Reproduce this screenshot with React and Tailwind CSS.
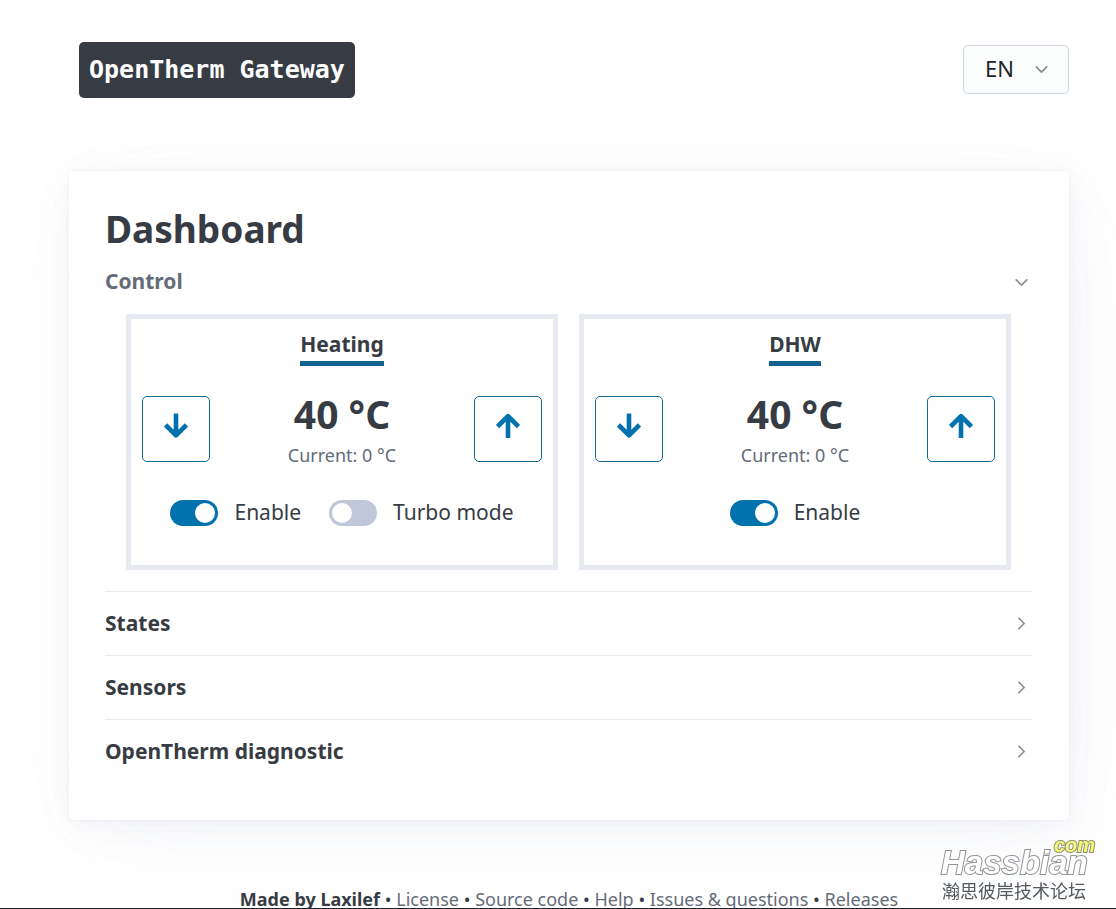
import { useState } from 'react'
import { ChevronDown, ChevronRight } from 'lucide-react'

const FOOTER_LINKS = ['License', 'Source code', 'Help', 'Issues & questions', 'Releases']

// ── Icons ────────────────────────────────────────────────────────────────────
function ArrowIcon({ d }) {
  return (
    <svg
      width="24"
      height="26"
      viewBox="0 0 24 26"
      fill="none"
      stroke="currentColor"
      strokeWidth="4.6"
      strokeLinejoin="round"
      aria-hidden="true"
    >
      <path d={d} />
    </svg>
  )
}

const ARROW_DOWN = 'M12 0.5V22M1.6 12L12 22.4L22.4 12'
const ARROW_UP = 'M12 25V3.5M1.6 13.5L12 3.1L22.4 13.5'

// ── Switch ───────────────────────────────────────────────────────────────────
function Switch({ id, label, defaultChecked }) {
  return (
    <div className="flex items-center gap-4">
      <input
        id={id}
        type="checkbox"
        role="switch"
        defaultChecked={defaultChecked}
        className="flex h-[26px] w-12 shrink-0 cursor-pointer appearance-none items-center rounded-full bg-[#bfc7d9] p-[3px] before:block before:size-5 before:rounded-full before:bg-white checked:justify-end checked:bg-[#0172ad]"
      />
      <label htmlFor={id} className="cursor-pointer pb-[2px] text-[21px] leading-8">
        {label}
      </label>
    </div>
  )
}

function StepButton({ d, label, onClick }) {
  return (
    <button
      type="button"
      aria-label={label}
      onClick={onClick}
      className="flex h-[66px] w-[68px] shrink-0 cursor-pointer justify-center rounded-[5px] border border-[#126a94] pt-4 text-[#0172ad]"
    >
      <ArrowIcon d={d} />
    </button>
  )
}

// ── Thermostat ───────────────────────────────────────────────────────────────
function Thermostat({ title, children }) {
  const [target, setTarget] = useState(40)

  return (
    <section className="min-w-0 flex-1 border-[5px] border-[#e7eaf0] px-[11px] pt-2 pb-[35px]">
      <h2 className="mx-auto w-fit border-b-[5px] border-[#126490] text-[21px] leading-[34px] font-bold">
        {title}
      </h2>
      <div className="mt-[18px] flex items-center justify-between">
        <StepButton d={ARROW_DOWN} label={`${title} down`} onClick={() => setTarget(target - 1)} />
        <div className="pt-[7px] pb-px text-center">
          <div className="text-[39px] leading-[46px] font-bold">{target} °C</div>
          <div className="text-[18px] leading-9 text-[#646b79]">Current: 0 °C</div>
        </div>
        <StepButton d={ARROW_UP} label={`${title} up`} onClick={() => setTarget(target + 1)} />
      </div>
      <div className="mt-[22px] flex justify-center gap-7">{children}</div>
    </section>
  )
}

function Panel({ title, children }) {
  return (
    <details className="border-t border-[#e7e9ea]">
      <summary className="flex h-[63px] cursor-pointer list-none items-center justify-between text-[21px] font-bold">
        {title}
        <ChevronRight size={21} strokeWidth={2} className="text-[#8b8f96]" />
      </summary>
      {children}
    </details>
  )
}

export default function App() {
  return (
    <div className="min-h-screen overflow-hidden border-b border-[#1c212c] bg-white pr-[47px] pl-[69px] font-['Noto_Sans',sans-serif] text-[#373c44]">
      <header className="flex items-start justify-between pt-[42px] pl-[10px]">
        <h1 className="rounded-[5px] bg-[#373c44] px-[10px] font-['DejaVu_Sans_Mono',monospace] text-[25px] leading-[56px] font-bold text-white">
          OpenTherm Gateway
        </h1>
        <div className="relative mt-[3px]">
          <select
            aria-label="Language"
            defaultValue="EN"
            className="h-[49px] w-[106px] cursor-pointer appearance-none rounded-[5px] border border-[#cfd5e2] bg-[#fbfcfc] pb-[2px] pl-[21px] text-[22px] text-[#23262c]"
          >
            <option>EN</option>
            <option>RU</option>
          </select>
          <ChevronDown
            size={21}
            strokeWidth={2}
            className="pointer-events-none absolute top-[14px] right-[17px] text-[#8b8f96]"
          />
        </div>
      </header>

      <main className="mt-[73px] rounded-[5px] bg-white pt-[33px] pr-[37px] pb-[37px] pl-9 shadow-[0_1px_4px_rgba(129,145,181,0.017),1px_1px_8px_rgba(129,145,181,0.024),1px_3px_16px_rgba(129,145,181,0.03),2px_5px_28px_rgba(129,145,181,0.036),4px_9px_52px_rgba(129,145,181,0.043),10px_20px_120px_rgba(129,145,181,0.06),0_0_0_1px_rgba(129,145,181,0.015)]">
        <h2 className="text-[37px] leading-[50px] font-bold">Dashboard</h2>

        <details open className="pb-[21px]">
          <summary className="mt-3 mb-4 flex h-8 cursor-pointer list-none items-center justify-between text-[21px] font-bold text-[#646b79]">
            Control
            <ChevronDown size={21} strokeWidth={2} className="text-[#8b8f96]" />
          </summary>
          <div className="flex gap-[21px] px-[21px]">
            <Thermostat title="Heating">
              <Switch id="heating-enable" label="Enable" defaultChecked />
              <Switch id="heating-turbo" label="Turbo mode" />
            </Thermostat>
            <Thermostat title="DHW">
              <Switch id="dhw-enable" label="Enable" defaultChecked />
            </Thermostat>
          </div>
        </details>

        <Panel title="States" />
        <Panel title="Sensors" />
        <Panel title="OpenTherm diagnostic" />
      </main>

      <footer className="mt-[70px] text-center text-[18px] leading-[18px]">
        <b>Made by Laxilef</b>
        {FOOTER_LINKS.map((link) => (
          <span key={link}>
            {' • '}
            <a href="#" className="text-[#646b79]">
              {link}
            </a>
          </span>
        ))}
      </footer>

      {/* forum stamp */}
      <div className="pointer-events-none fixed right-[21px] bottom-[7px] w-[154px] font-['Liberation_Sans','Noto_Sans_CJK_SC',sans-serif] text-[#555a60]">
        <div className="absolute -top-[11px] right-0 text-[20px] leading-5 font-bold text-[#f4f77a] italic [-webkit-text-stroke:2px_#8c8f6c] [paint-order:stroke_fill]">
          com
        </div>
        <div className="pb-[2px] text-[33px] leading-[34px] font-bold text-white italic [-webkit-text-stroke:2px_#909397] [paint-order:stroke_fill]">
          Hassbian
        </div>
        <div className="pl-px text-[18px] leading-5">瀚思彼岸技术论坛</div>
      </div>
    </div>
  )
}
